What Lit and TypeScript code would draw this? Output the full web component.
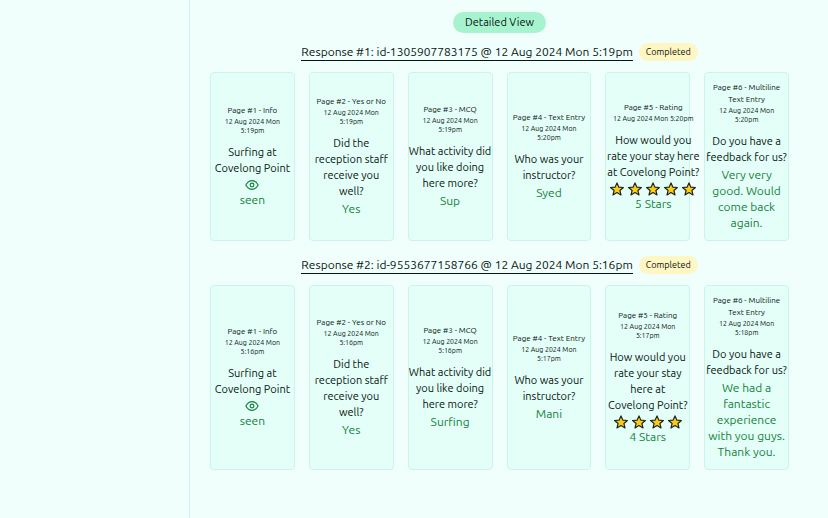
import { LitElement, html, css, svg, nothing } from "lit";
import { customElement, property } from "lit/decorators.js";

type Answer =
  | { kind: "seen" }
  | { kind: "text"; value: string }
  | { kind: "rating"; stars: number };

interface Page {
  title: string;
  time: string;
  question: string;
  answer: Answer;
}

interface SurveyResponse {
  heading: string;
  status: string;
  pages: Page[];
}

const text = (value: string): Answer => ({ kind: "text", value });

const day = "12 Aug 2024 Mon";

const buildPages = (times: string[], answers: Answer[]): Page[] => {
  const prompts: [string, string][] = [
    ["Info", "Surfing at Covelong Point"],
    ["Yes or No", "Did the reception staff receive you well?"],
    ["MCQ", "What activity did you like doing here more?"],
    ["Text Entry", "Who was your instructor?"],
    ["Rating", "How would you rate your stay here at Covelong Point?"],
    ["Multiline Text Entry", "Do you have a feedback for us?"],
  ];
  return prompts.map(([type, question], i) => ({
    title: `Page #${i + 1} - ${type}`,
    time: `${day} ${times[i]}`,
    question,
    answer: answers[i],
  }));
};

const responses: SurveyResponse[] = [
  {
    heading: `Response #1: id-1305907783175 @ ${day} 5:19pm`,
    status: "Completed",
    pages: buildPages(
      ["5:19pm", "5:19pm", "5:19pm", "5:20pm", "5:20pm", "5:20pm"],
      [
        { kind: "seen" },
        text("Yes"),
        text("Sup"),
        text("Syed"),
        { kind: "rating", stars: 5 },
        text("Very very good. Would come back again."),
      ],
    ),
  },
  {
    heading: `Response #2: id-9553677158766 @ ${day} 5:16pm`,
    status: "Completed",
    pages: buildPages(
      ["5:16pm", "5:16pm", "5:16pm", "5:17pm", "5:17pm", "5:18pm"],
      [
        { kind: "seen" },
        text("Yes"),
        text("Surfing"),
        text("Mani"),
        { kind: "rating", stars: 4 },
        text("We had a fantastic experience with you guys. Thank you."),
      ],
    ),
  },
];

const eyeIcon = svg`<svg class="eye" viewBox="0 0 24 24" aria-hidden="true">
  <path d="M1.500 12C4 7.300 7.700 4.500 12 4.500s8 2.800 10.500 7.500C20 16.700 16.300 19.500 12 19.500S4 16.700 1.500 12Z" />
  <circle cx="12" cy="12" r="3.200" />
</svg>`;

const starIcon = () => svg`<svg class="star" viewBox="0 0 24 24" aria-hidden="true">
  <path d="M12 1.500l3.100 7.200 7.900.700-6 5.200 1.900 7.700L12 18.200l-6.900 4.100L7 14.600 1 9.400l7.900-.700z" />
</svg>`;

@customElement("page-card")
export class PageCard extends LitElement {
  @property({ attribute: false }) page!: Page;

  static styles = css`
    :host {
      display: flex;
      flex-direction: column;
      justify-content: center;
      box-sizing: border-box;
      min-width: 0;
      padding: 9px 0;
      border: 1px solid #c9f5e8;
      border-radius: 4px;
      background: #e3fff8;
      text-align: center;
    }
    .body {
      min-width: min-content;
    }
    .title,
    .time,
    .question,
    .answer {
      margin: 0;
      font-weight: 400;
    }
    .title {
      padding: 0 4px;
      font-size: 8px;
      line-height: 12px;
    }
    .time {
      padding: 0 4px;
      font-size: 7px;
      line-height: 9px;
    }
    .question {
      margin-top: 9px;
      font-size: 11px;
      line-height: 16px;
    }
    .answer {
      margin-top: 2px;
      color: #15803d;
      font-size: 12px;
      line-height: 16px;
    }
    .graphic {
      margin-top: 0;
    }
    .eye {
      display: block;
      width: 14px;
      height: 14px;
      margin: 2px auto 0;
      fill: none;
      stroke: currentColor;
      stroke-width: 2;
    }
    .stars {
      display: flex;
      justify-content: center;
      gap: 4px;
      padding: 2px 4px 0;
    }
    .star {
      flex: none;
      width: 14px;
      height: 14px;
      fill: #facc15;
      stroke: #1c2321;
      stroke-width: 2;
      stroke-linejoin: round;
    }
  `;

  private renderAnswer(answer: Answer) {
    switch (answer.kind) {
      case "seen":
        return html`<div class="answer graphic">${eyeIcon}seen</div>`;
      case "rating":
        return html`<div class="answer graphic">
          <div class="stars">
            ${Array.from({ length: answer.stars }, starIcon)}
          </div>
          ${answer.stars} Stars
        </div>`;
      case "text":
        return html`<p class="answer">${answer.value}</p>`;
    }
  }

  render() {
    if (!this.page) return nothing;
    const { title, time, question, answer } = this.page;
    return html`<div class="body">
      <h4 class="title">${title}</h4>
      <p class="time">${time}</p>
      <p class="question">${question}</p>
      ${this.renderAnswer(answer)}
    </div>`;
  }
}

@customElement("app-root")
export class AppRoot extends LitElement {
  static styles = css`
    :host {
      display: grid;
      grid-template-columns: 190px minmax(0, 1fr);
      min-height: 100vh;
      background: #f0fffc;
      color: #0a1410;
      font-family: Ubuntu, "Noto Sans", sans-serif;
    }
    .sidebar {
      border-right: 1px solid #c9f5e8;
    }
    .content {
      display: flex;
      flex-direction: column;
      padding: 12px 39px 12px 20px;
    }
    .view-title {
      align-self: center;
      margin: 0 0 10px;
      padding: 0 12px;
      border-radius: 11px;
      background: #a7f3d0;
      font-size: 11px;
      font-weight: 400;
      line-height: 21px;
    }
    .response {
      margin-bottom: 15px;
    }
    .head {
      display: flex;
      align-items: center;
      justify-content: center;
      gap: 6px;
      margin-bottom: 11px;
    }
    .heading {
      margin: 0;
      border-bottom: 1px solid currentColor;
      font-size: 12px;
      font-weight: 400;
      line-height: 16px;
    }
    .status {
      padding: 0 7px;
      border-radius: 9px;
      background: #fef6c3;
      font-size: 9px;
      line-height: 18px;
    }
    .pages {
      display: grid;
      grid-template-columns: repeat(6, minmax(0, 1fr));
      gap: 14px;
    }
  `;

  render() {
    return html`
      <aside class="sidebar"></aside>
      <main class="content">
        <h2 class="view-title">Detailed View</h2>
        ${responses.map(
          (response) => html`<section class="response">
            <div class="head">
              <h3 class="heading">${response.heading}</h3>
              <span class="status">${response.status}</span>
            </div>
            <div class="pages">
              ${response.pages.map((page) => html`<page-card .page=${page}></page-card>`)}
            </div>
          </section>`,
        )}
      </main>
    `;
  }
}
